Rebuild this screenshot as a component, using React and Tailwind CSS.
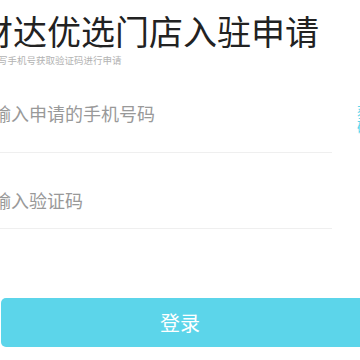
export default function App() {
  const font = { fontFamily: '"Noto Sans CJK SC", "Noto Sans", sans-serif' };
  return (
    <div className="w-[360px] h-[360px] overflow-hidden bg-white" style={font}>
      <div className="ml-[-21px] w-[440px]">
        <div className="pt-[13px] text-[34px] leading-[36px] text-[#222222] whitespace-nowrap">
          财达优选门店入驻申请
        </div>
        <div className="mt-[4px] text-[9.5px] leading-[14px] text-[#b3b3b3] whitespace-nowrap">
          请填写手机号获取验证码进行申请
        </div>
        <div className="flex items-start">
          <div className="w-[357px] border-b border-[#efefef] pt-[34px] pb-[27px] text-[18px] leading-[24px] text-[#999999] whitespace-nowrap ml-[-4px]">
            请输入申请的手机号码
          </div>
          <div className="ml-[25px] mt-[37px] w-[58px] text-[14px] leading-[15px] text-[#5cd5ea]">
            获取验证码
          </div>
        </div>
        <div className="w-[357px] ml-[-4px] border-b border-[#efefef] pt-[35px] pb-[16px] text-[18px] leading-[24px] text-[#999999] whitespace-nowrap">
          请输入验证码
        </div>
        <div className="ml-[22px] mt-[69px] w-[380px] h-[49px] rounded-[5px] bg-[#5cd5ea] flex items-center">
          <span className="w-[358px] text-center text-[20px] text-white">登录</span>
        </div>
      </div>
    </div>
  );
}
